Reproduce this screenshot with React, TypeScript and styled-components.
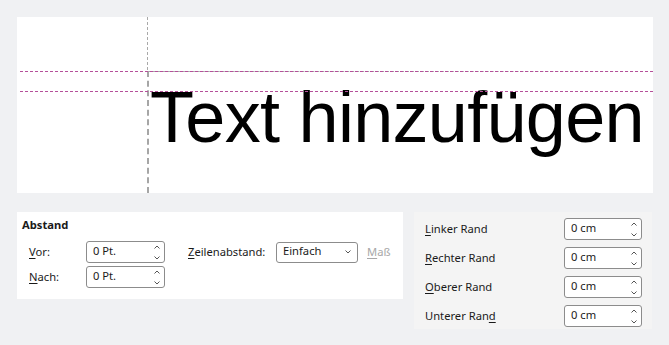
import styled, { createGlobalStyle } from 'styled-components';

const GlobalStyle = createGlobalStyle`
  html, body {
    margin: 0;
    padding: 0;
    background: #f0f1f3;
  }
  body {
    font-family: "Noto Sans", "Open Sans", sans-serif;
    font-size: 11.2px;
    color: #1a1a1a;
  }
`

const Page = styled.div`
  width: 669px;
  height: 345px;
  box-sizing: border-box;
  padding: 17px 16px 0 17px;
  display: flex;
  flex-direction: column;
`

const Preview = styled.div`
  position: relative;
  height: 176px;
  background: #fff;
  overflow: hidden;
  display: flex;
  flex-direction: column;
`

// guide lines of the preview canvas
const Guide = styled.div<{ $top: number }>`
  position: absolute;
  left: 3px;
  right: 0;
  top: ${p => p.$top}px;
  height: 1px;
  background: repeating-linear-gradient(90deg, #b5509a 0 3px, transparent 3px 5px);
`

const VGuide = styled.div`
  position: absolute;
  left: 130px;
  top: 0;
  height: 54px;
  width: 1px;
  background: repeating-linear-gradient(180deg, #a9a9a9 0 3px, transparent 3px 5px);
`

const TextBox = styled.div`
  margin: 54px 0 0 130px;
  flex: 1;
  border-top: 1px dashed #a6a6a6;
  border-left: 2px dashed #a6a6a6;
  padding: 9px 0 0 1px;
  font-family: "Liberation Sans", Arial, sans-serif;
  font-size: 72px;
  line-height: 72px;
  letter-spacing: -0.7px;
  color: #000;
  white-space: nowrap;
`

const BottomRow = styled.div`
  display: flex;
  gap: 11px;
  margin-top: 19px;
  align-items: flex-start;
`

const SpacingPanel = styled.div`
  width: 386px;
  height: 87px;
  box-sizing: border-box;
  background: #fff;
  padding: 5px 0 0 5px;
`

const Title = styled.div`
  font-weight: 700;
  line-height: 16px;
  height: 16px;
  margin-bottom: 8px;
`

const SpacingGrid = styled.div`
  display: grid;
  grid-template-columns: 57px 79px 23px 88px 82px 9px auto;
  grid-auto-rows: 22px;
  row-gap: 3px;
  align-items: center;
  padding-left: 7px;
`

const Label = styled.span<{ $col?: number }>`
  grid-column: ${p => p.$col ?? 'auto'};
  white-space: nowrap;
  line-height: 16px;
`

const Key = styled.span`
  text-decoration: underline;
  text-underline-offset: 2px;
`

const Disabled = styled.span`
  color: #a8a8a8;
`

const SpinBox = styled.div<{ $width: number }>`
  width: ${p => p.$width}px;
  height: 22px;
  box-sizing: border-box;
  border: 1px solid #8c8c8c;
  border-radius: 3px;
  background: #fff;
  display: flex;
  align-items: center;
  padding: 0 4px 0 6px;
`

const Value = styled.span`
  flex: 1;
  line-height: 16px;
  margin-top: -2px;
`

const Arrows = styled.div`
  display: flex;
  flex-direction: column;
  gap: 7px;
`

const Select = styled.div`
  width: 82px;
  height: 21px;
  box-sizing: border-box;
  border: 1px solid #8c8c8c;
  border-radius: 3px;
  background: #fff;
  display: flex;
  align-items: center;
  padding: 0 6px 0 6px;
`

const MarginPanel = styled.div`
  width: 238px;
  height: 117px;
  box-sizing: border-box;
  background: #f4f4f4;
  padding: 6px 10px 0 11px;
  display: flex;
  flex-direction: column;
  gap: 7px;
`

const MarginRow = styled.div`
  display: flex;
  align-items: center;
  justify-content: space-between;
  height: 22px;
`

const Up = () => (
  <svg width="6" height="4" viewBox="0 0 6 4">
    <path d="M0.5 3.5 L3 1 L5.5 3.5" fill="none" stroke="#555" strokeWidth="1" />
  </svg>
)

const Down = () => (
  <svg width="6" height="4" viewBox="0 0 6 4">
    <path d="M0.5 0.5 L3 3 L5.5 0.5" fill="none" stroke="#555" strokeWidth="1" />
  </svg>
)

const Spinner = ({ value, width }: { value: string; width: number }) => (
  <SpinBox $width={width}>
    <Value>{value}</Value>
    <Arrows>
      <Up />
      <Down />
    </Arrows>
  </SpinBox>
)

const margins: [string, string, string][] = [
  ['L', 'inker Rand', ''],
  ['R', 'echter Rand', ''],
  ['O', 'berer Rand', ''],
  ['', 'Unterer Ran', 'd'],
]

const App = () => (
  <>
    <GlobalStyle />
    <Page>
      <Preview>
        <VGuide />
        <Guide $top={54} />
        <Guide $top={74} />
        <TextBox>Text hinzufügen</TextBox>
      </Preview>
      <BottomRow>
        <SpacingPanel>
          <Title>Abstand</Title>
          <SpacingGrid>
            <Label><Key>V</Key>or:</Label>
            <Spinner value="0 Pt." width={79} />
            <Label $col={4}><Key>Z</Key>eilenabstand:</Label>
            <Select>
              <Value>Einfach</Value>
              <Down />
            </Select>
            <Label $col={7}><Disabled><Key>M</Key>aß</Disabled></Label>
            <Label><Key>N</Key>ach:</Label>
            <Spinner value="0 Pt." width={79} />
          </SpacingGrid>
        </SpacingPanel>
        <MarginPanel>
          {margins.map(([key, rest, tail]) => (
            <MarginRow key={rest}>
              <Label>
                {key && <Key>{key}</Key>}
                {rest}
                {tail && <Key>{tail}</Key>}
              </Label>
              <Spinner value="0 cm" width={78} />
            </MarginRow>
          ))}
        </MarginPanel>
      </BottomRow>
    </Page>
  </>
)

export default App;
